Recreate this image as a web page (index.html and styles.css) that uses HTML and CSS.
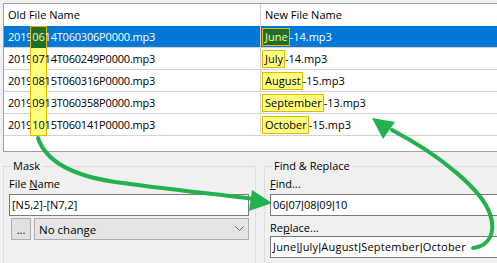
FILE: index.html
```html
<!DOCTYPE html>
<html>
<head>
<meta charset="utf-8">
<link rel="stylesheet" href="styles.css">
</head>
<body>
<div class="page">
  <div class="list">
    <div class="row head">
      <div class="c1">Old File Name</div>
      <div class="c2">New File Name</div>
    </div>
    <div class="row sel">
      <div class="c1 num">2019<span class="hl first">06</span>14T060306P0000.mp3</div>
      <div class="c2"><span class="hl2">June</span>-14.mp3</div>
    </div>
    <div class="row">
      <div class="c1 num">2019<span class="hl">07</span>14T060249P0000.mp3</div>
      <div class="c2"><span class="hl2">July</span>-14.mp3</div>
    </div>
    <div class="row">
      <div class="c1 num">2019<span class="hl">08</span>15T060316P0000.mp3</div>
      <div class="c2"><span class="hl2">August</span>-15.mp3</div>
    </div>
    <div class="row">
      <div class="c1 num">2019<span class="hl">09</span>13T060358P0000.mp3</div>
      <div class="c2"><span class="hl2">September</span>-13.mp3</div>
    </div>
    <div class="row">
      <div class="c1 num">2019<span class="hl last">10</span>15T060141P0000.mp3</div>
      <div class="c2"><span class="hl2">October</span>-15.mp3</div>
    </div>
    <div class="filler"></div>
  </div>

  <div class="bottom">
    <fieldset class="group mask">
      <legend>Mask</legend>
      <div class="label">File <u>N</u>ame</div>
      <div class="field">[N5,2]-[N7,2]</div>
      <div class="ctlrow">
        <div class="btn">...</div>
        <div class="select">
          <span>No change</span>
          <svg class="chev" width="9" height="6" viewBox="0 0 9 6"><polyline points="0.5,0.5 4.5,4.5 8.5,0.5" fill="none" stroke="#606060" stroke-width="1"/></svg>
        </div>
      </div>
    </fieldset>
    <fieldset class="group fr">
      <legend>Find &amp; Replace</legend>
      <div class="label"><u>F</u>ind...</div>
      <div class="field">06<span class="bar">|</span>07<span class="bar">|</span>08<span class="bar">|</span>09<span class="bar">|</span>10</div>
      <div class="label label2">Re<u>p</u>lace...</div>
      <div class="field field2 wide">June<span class="bar">|</span>July<span class="bar">|</span>August<span class="bar">|</span>September<span class="bar">|</span>October</div>
    </fieldset>
  </div>

  <svg class="arrows" width="497" height="263" viewBox="0 0 497 263">
    <path d="M38,138 C46,162 75,176 115,182 C165,189 215,194 254,199" fill="none" stroke="#22b14c" stroke-width="4" stroke-linecap="round"/>
    <polygon points="272,203 252,190 249,211" fill="#22b14c"/>
    <path d="M473,248 C490,246 496,232 490,214 C482,190 440,155 392,130" fill="none" stroke="#22b14c" stroke-width="4" stroke-linecap="round"/>
    <polygon points="372,118 395,122 383,139" fill="#22b14c"/>
  </svg>
</div>
</body>
</html>
```
FILE: styles.css
```css
html, body {
  margin: 0;
  padding: 0;
  width: 497px;
  height: 263px;
  overflow: hidden;
  background: #f0f0f0;
}

.page {
  position: relative;
  width: 497px;
  height: 263px;
  padding-top: 3px;
  box-sizing: border-box;
  overflow: hidden;
  font-family: "Open Sans", "Liberation Sans", Arial, sans-serif;
  font-size: 11px;
  color: #000;
}

.list {
  margin-left: 3px;
  width: 560px;
  background: #fff;
  border: 1px solid #a0a0a0;
}

.row {
  display: flex;
  height: 22px;
  box-sizing: border-box;
  border-bottom: 1px solid #d4d4d4;
  white-space: nowrap;
}

.row.head {
  border-bottom: none;
}

.row.head .c1,
.row.head .c2 {
  line-height: 22px;
}

.c1 {
  width: 257px;
  flex: none;
  box-sizing: border-box;
  border-right: 1px solid #d4d4d4;
  padding-left: 4px;
  line-height: 21px;
}

.c1.num {
  letter-spacing: -0.2px;
}

.c2 {
  flex: 1;
  padding-left: 4px;
  line-height: 21px;
}

.row.sel {
  background: #0078d7;
  color: #fff;
}

.hl {
  display: inline-block;
  vertical-align: top;
  height: 22px;
  line-height: 21px;
  padding: 0 2px;
  margin: 0 -2px;
  background: #ffff80;
  box-shadow: inset 1px 0 0 #e8b800, inset -1px 0 0 #e8b800;
}

.hl.first {
  box-shadow: inset 1px 0 0 #e8b800, inset -1px 0 0 #e8b800, inset 0 1px 0 #e8b800;
}

.hl.last {
  box-shadow: inset 1px 0 0 #e8b800, inset -1px 0 0 #e8b800, inset 0 -1px 0 #e8b800;
}

.hl2 {
  display: inline-block;
  line-height: 16px;
  padding: 0 1px 0 2px;
  margin-left: -3px;
  background: #ffff80;
  border: 1px solid #e8b800;
}

.sel .hl,
.sel .hl2 {
  background: #1f6f2c;
  color: #f4ffa8;
}

.filler {
  height: 15px;
}

.bottom {
  display: flex;
  gap: 8px;
  margin-top: 7px;
  padding-left: 3px;
}

.group {
  margin: 0;
  padding: 0 6px 12px 5px;
  border: 1px solid #dcdcdc;
  min-width: 0;
  box-sizing: border-box;
}

.group legend {
  padding: 0 2px;
  margin-left: 2px;
  line-height: 14px;
  font-size: 11px;
}

.mask {
  width: 253px;
  flex: none;
}

.fr {
  width: 260px;
  flex: none;
}

.label {
  margin-top: 4px;
  line-height: 14px;
}

.label2 {
  margin-top: 5px;
}

.field {
  margin-top: 3px;
  height: 22px;
  box-sizing: border-box;
  border: 1px solid #7a7a7a;
  background: #fff;
  padding-left: 2px;
  line-height: 20px;
  white-space: nowrap;
  overflow: hidden;
}

.field .bar {
  font-family: "Liberation Sans", Arial, sans-serif;
}

.field.wide {
  letter-spacing: 0.2px;
}

.field2 {
  margin-top: 1px;
}

.ctlrow {
  display: flex;
  gap: 3px;
  margin-top: 2px;
  padding-left: 2px;
}

.btn {
  width: 20px;
  height: 22px;
  box-sizing: border-box;
  border: 1px solid #adadad;
  background: #e1e1e1;
  text-align: center;
  line-height: 22px;
}

.select {
  width: 215px;
  height: 22px;
  box-sizing: border-box;
  border: 1px solid #adadad;
  background: #e5e5e5;
  display: flex;
  align-items: center;
  justify-content: space-between;
  padding: 0 4px 0 4px;
}

.select span {
  font-size: 11.5px;
}

.chev {
  display: block;
}

.arrows {
  position: absolute;
  left: 0;
  top: 0;
  pointer-events: none;
}
```
